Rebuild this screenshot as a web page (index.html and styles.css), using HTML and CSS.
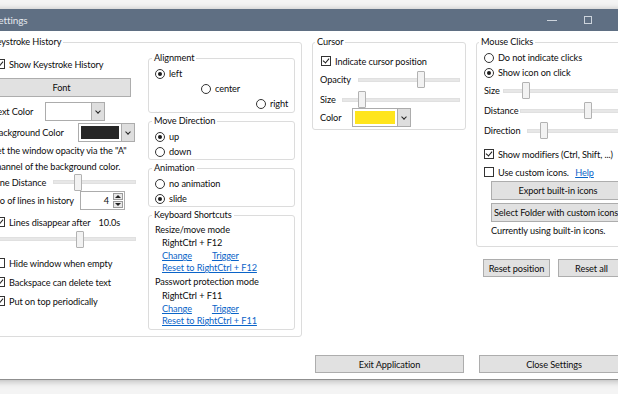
FILE: index.html
```html
<!DOCTYPE html>
<html lang="en">
<head>
  <meta charset="UTF-8" />
  <title>Settings</title>
  <link rel="stylesheet" href="styles.css">
</head>
<body>

<div class="window">
  <div class="titlebar">
    <span class="title">Settings</span>
    <span class="caps">
      <span class="cap"><span class="cap-min"></span></span>
      <span class="cap"><span class="cap-max"></span></span>
      <span class="cap">&#x2715;</span>
    </span>
  </div>

  <div class="content">

    <fieldset class="group keystrokes">
      <legend>Keystroke History</legend>
      <div class="ks-body">
        <div class="ks-left">
          <div class="opt ks-opt first"><span class="box checked"></span>Show Keystroke History</div>
          <button class="btn font-btn">Font</button>
          <div class="field text-color">
            <span class="lbl lbl-text">Text Color</span>
            <div class="combo combo-text"><span class="swatch white"></span><span class="drop"></span></div>
          </div>
          <div class="field bg-color">
            <span class="lbl lbl-bg">Background Color</span>
            <div class="combo combo-bg"><span class="swatch dark"></span><span class="drop"></span></div>
          </div>
          <p class="hint">Set the window opacity via the "A"<br>channel of the background color.</p>
          <div class="field line-dist">
            <span class="lbl lbl-dist">Line Distance</span>
            <input class="slider" type="range" min="0" max="100" value="28">
          </div>
          <div class="field lines-count">
            <span class="lbl lbl-count">No of lines in history</span>
            <div class="spin">
              <span class="spin-val">4</span>
              <span class="spin-btns"><span class="spin-up"></span><span class="spin-down"></span></span>
            </div>
          </div>
          <div class="opt ks-opt disappear"><span class="box checked"></span>Lines disappear after <span class="secs">10.0s</span></div>
          <div class="field fade-row">
            <input class="slider fade-slider" type="range" min="0" max="100" value="62">
          </div>
          <div class="opt ks-opt hide-row"><span class="box"></span>Hide window when empty</div>
          <div class="opt ks-opt gap3"><span class="box checked"></span>Backspace can delete text</div>
          <div class="opt ks-opt gap3"><span class="box checked"></span>Put on top periodically</div>
        </div>

        <div class="ks-right">
          <fieldset class="group sub align">
            <legend>Alignment</legend>
            <div class="opt radio-row"><span class="dot checked"></span>left</div>
            <div class="opt radio-row center"><span class="dot"></span>center</div>
            <div class="opt radio-row right"><span class="dot"></span>right</div>
          </fieldset>
          <fieldset class="group sub">
            <legend>Move Direction</legend>
            <div class="opt radio-row"><span class="dot checked"></span>up</div>
            <div class="opt radio-row"><span class="dot"></span>down</div>
          </fieldset>
          <fieldset class="group sub">
            <legend>Animation</legend>
            <div class="opt radio-row"><span class="dot"></span>no animation</div>
            <div class="opt radio-row"><span class="dot checked"></span>slide</div>
          </fieldset>
          <fieldset class="group sub shortcuts">
            <legend>Keyboard Shortcuts</legend>
            <div class="kb-title">Resize/move mode</div>
            <div class="kb-keys">RightCtrl + F12</div>
            <div class="kb-links"><a href="#">Change</a><a href="#">Trigger</a></div>
            <div class="kb-links"><a href="#">Reset to RightCtrl + F12</a></div>
            <div class="kb-title second">Passwort protection mode</div>
            <div class="kb-keys">RightCtrl + F11</div>
            <div class="kb-links"><a href="#">Change</a><a href="#">Trigger</a></div>
            <div class="kb-links"><a href="#">Reset to RightCtrl + F11</a></div>
          </fieldset>
        </div>
      </div>
    </fieldset>

    <fieldset class="group cursor">
      <legend>Cursor</legend>
      <div class="opt cur-opt"><span class="box checked"></span>Indicate cursor position</div>
      <div class="field cur-opacity">
        <span class="lbl lbl-opacity">Opacity</span>
        <input class="slider" type="range" min="0" max="100" value="63">
      </div>
      <div class="field cur-size">
        <span class="lbl lbl-size">Size</span>
        <input class="slider" type="range" min="0" max="100" value="14">
      </div>
      <div class="field cur-color">
        <span class="lbl lbl-color">Color</span>
        <div class="combo combo-yellow"><span class="swatch yellow"></span><span class="drop"></span></div>
      </div>
    </fieldset>

    <div class="mouse-col">
      <fieldset class="group mouse">
        <legend>Mouse Clicks</legend>
        <div class="opt mouse-opt"><span class="dot"></span>Do not indicate clicks</div>
        <div class="opt mouse-opt"><span class="dot checked"></span>Show icon on click</div>
        <div class="field m-size">
          <span class="lbl lbl-msize">Size</span>
          <input class="slider" type="range" min="0" max="100" value="16">
        </div>
        <div class="field m-dist">
          <span class="lbl lbl-mdist">Distance</span>
          <input class="slider" type="range" min="0" max="100" value="66">
        </div>
        <div class="field m-dir">
          <span class="lbl lbl-mdir">Direction</span>
          <input class="slider" type="range" min="0" max="100" value="14">
        </div>
        <div class="opt mouse-opt modifiers"><span class="box checked"></span>Show modifiers (Ctrl, Shift, ...)</div>
        <div class="opt mouse-opt custom"><span class="box"></span>Use custom icons.&nbsp;<a href="#">Help</a></div>
        <button class="btn icon-btn export">Export built-in icons</button>
        <button class="btn icon-btn folder">Select Folder with custom icons</button>
        <div class="using">Currently using built-in icons.</div>
      </fieldset>
      <div class="reset-row">
        <button class="btn reset-btn">Reset position</button>
        <button class="btn reset-btn">Reset all</button>
      </div>
    </div>

    <button class="btn bottom-btn exit">Exit Application</button>
    <button class="btn bottom-btn close">Close Settings</button>

  </div>
</div>

</body>
</html>
```

FILE: styles.css
```css
* {
  box-sizing: border-box;
}
body {
  margin: 0;
  height: 394px;
  overflow: hidden;
  background: #f4f4f4;
  font-family: Lato, "Noto Sans", sans-serif;
  font-size: 9.2px;
  letter-spacing: -0.1px;
  color: #0d0d0d;
}
a {
  color: #0a64c8;
  text-decoration: underline;
}

/* window frame */
.window {
  margin: 9px 0 0 -20px;
  width: 662px;
  height: 371px;
  background: #fff;
  border-bottom: 1px solid #8f8f8f;
  box-shadow: 0 1px 7px rgba(0, 0, 0, 0.28);
  display: flex;
  flex-direction: column;
}
.titlebar {
  height: 22px;
  flex: none;
  background: #5f6f83;
  color: #e3e8ee;
  display: flex;
  align-items: center;
  padding-left: 13px;
  font-size: 10px;
}
.caps {
  margin-left: auto;
  display: flex;
  height: 100%;
}
.cap {
  width: 36px;
  display: flex;
  align-items: center;
  justify-content: center;
  font-size: 10px;
  color: #d5dbe2;
}
.cap-min {
  width: 10px;
  height: 1px;
  background: #cdd4dc;
}
.cap-max {
  width: 8px;
  height: 8px;
  border: 1px solid #cdd4dc;
}

.content {
  flex: 1;
  display: grid;
  grid-template-columns: 316px 154px 156px;
  grid-template-rows: 1fr auto;
  column-gap: 10px;
  align-items: start;
  padding: 3px 0 6px 6px;
}

/* group boxes */
.group {
  margin: 0;
  padding: 0 5px 0 6px;
  border: 1px solid #dcdcdc;
  border-radius: 3px;
  min-width: 0;
}
.group legend {
  padding: 0 2px;
  margin-left: -4px;
  line-height: 16px;
}
.keystrokes {
  padding: 0 6px 0 5px;
}
.keystrokes legend {
  margin-left: -3px;
}
.ks-body {
  display: flex;
  gap: 12px;
  padding-bottom: 6px;
}
.ks-left {
  width: 144px;
  display: flex;
  flex-direction: column;
}
.ks-right {
  width: 147px;
}
.sub {
  padding: 0 6px;
}
.align {
  padding-bottom: 1px;
}
.shortcuts {
  padding-bottom: 2px;
}

/* check boxes and radio buttons */
.opt {
  display: flex;
  align-items: center;
  gap: 4px;
  height: 16px;
  white-space: nowrap;
}
.box,
.dot {
  flex: none;
  width: 10px;
  height: 10px;
  border: 1px solid #333;
  background: #fff;
  display: flex;
  align-items: center;
  justify-content: center;
}
.dot {
  border-radius: 50%;
}
.dot.checked::after {
  content: "";
  width: 4px;
  height: 4px;
  border-radius: 50%;
  background: #1b1b1b;
}
.box.checked::after {
  content: "";
  width: 5px;
  height: 3px;
  border-left: 1.5px solid #1b1b1b;
  border-bottom: 1.5px solid #1b1b1b;
  transform: translateY(-1px) rotate(-50deg);
}
.ks-opt {
  padding-left: 3px;
}
.ks-opt.first {
  margin-top: 6px;
}
.disappear {
  margin-top: 4px;
}
.hide-row {
  margin-top: 8px;
}
.gap3 {
  margin-top: 3px;
}
.secs {
  margin-left: 4px;
}
.radio-row {
  height: 15px;
}
.radio-row.center {
  margin-left: 46px;
}
.radio-row.right {
  margin-left: 101px;
}

/* buttons */
.btn {
  font: inherit;
  letter-spacing: inherit;
  color: #0d0d0d;
  background: #e1e1e1;
  border: 1px solid #adadad;
  height: 19px;
  padding: 0;
  white-space: nowrap;
  overflow: hidden;
}
.font-btn {
  margin-top: 6px;
  width: 139px;
}

/* label + control rows */
.field {
  display: flex;
  align-items: center;
}
.lbl {
  flex: none;
  white-space: nowrap;
  padding-left: 1px;
}
.text-color {
  margin-top: 5px;
}
.bg-color {
  margin-top: 2px;
}
.lbl-text { width: 53px; }
.lbl-bg { width: 86px; }
.lbl-dist { width: 61px; }
.lbl-count { width: 88px; }
.lbl-opacity { width: 39px; }
.lbl-size { width: 23px; }
.lbl-color { width: 33px; }
.lbl-msize { width: 20px; }
.lbl-mdist { width: 37px; }
.lbl-mdir { width: 44px; }

.hint {
  margin: 1px 0 0;
  line-height: 16px;
  white-space: nowrap;
}
.line-dist {
  height: 14px;
}
.lines-count {
  margin-top: 2px;
}
.fade-row {
  margin-top: 1px;
  height: 16px;
}
.fade-slider {
  flex: none;
  width: 112px;
  margin-left: 24px;
}

/* combo boxes */
.combo {
  display: flex;
  height: 19px;
  border: 1px solid #acacac;
  background: #fff;
}
.combo-text { width: 60px; }
.combo-bg { width: 57px; }
.combo-yellow { width: 59px; }
.swatch {
  flex: 1;
  margin: 2px;
}
.swatch.dark { background: #262626; }
.swatch.yellow { background: #ffe51c; }
.drop {
  flex: none;
  width: 13px;
  background: #dedede;
  border-left: 1px solid #acacac;
  display: flex;
  align-items: center;
  justify-content: center;
}
.drop::after {
  content: "";
  width: 3px;
  height: 3px;
  border-right: 1.5px solid #222;
  border-bottom: 1.5px solid #222;
  transform: translateY(-1px) rotate(45deg);
}

/* number box */
.spin {
  display: flex;
  width: 45px;
  height: 19px;
  border: 1px solid #acacac;
}
.spin-val {
  flex: 1;
  text-align: right;
  padding-right: 3px;
  line-height: 17px;
}
.spin-btns {
  width: 12px;
  display: flex;
  flex-direction: column;
  padding: 1px;
  gap: 1px;
}
.spin-up,
.spin-down {
  flex: 1;
  background: #e8e8e8;
  border: 1px solid #9a9a9a;
  display: flex;
  align-items: center;
  justify-content: center;
}
.spin-up::after,
.spin-down::after {
  content: "";
  border-left: 3px solid transparent;
  border-right: 3px solid transparent;
}
.spin-up::after { border-bottom: 3px solid #222; }
.spin-down::after { border-top: 3px solid #222; }

/* sliders */
.slider {
  -webkit-appearance: none;
  appearance: none;
  flex: 1;
  min-width: 0;
  height: 17px;
  margin: 0;
  background: transparent;
}
.slider::-webkit-slider-runnable-track {
  height: 4px;
  background: #e7e7e7;
  border: 1px solid #e0e0e0;
}
.slider::-webkit-slider-thumb {
  -webkit-appearance: none;
  width: 8px;
  height: 17px;
  margin-top: -7.5px;
  background: #f2f2f2;
  border: 1px solid #b2b2b2;
  border-radius: 1px;
}

/* keyboard shortcuts */
.kb-title {
  height: 13px;
  line-height: 13px;
}
.kb-title.second {
  margin-top: 1px;
  height: 14px;
  line-height: 14px;
}
.kb-keys {
  height: 14px;
  line-height: 14px;
  padding-left: 7px;
}
.kb-links {
  height: 12px;
  line-height: 12px;
  padding-left: 7px;
  display: flex;
  gap: 20px;
}

/* cursor */
.cursor {
  padding-bottom: 2px;
}
.cur-opt {
  margin-top: 3px;
  padding-left: 2px;
}
.cur-opacity {
  margin-top: 2px;
}
.cur-size {
  margin-top: 3px;
}

/* mouse clicks */
.mouse {
  padding-bottom: 8px;
}
.mouse-opt {
  height: 15px;
  padding-left: 1px;
}
.m-size { margin-top: 2px; }
.m-dist { margin-top: 3px; }
.m-dir { margin-top: 3px; }
.modifiers {
  margin-top: 7px;
  height: 16px;
}
.custom {
  margin-top: 2px;
  height: 16px;
}
.icon-btn {
  display: block;
  width: 134px;
  margin-left: 8px;
}
.export { margin-top: 1px; }
.folder { margin-top: 3px; text-align: left; padding-left: 2px; }
.using {
  margin: 1px 0 0 8px;
  line-height: 15px;
  white-space: nowrap;
}
.reset-row {
  margin-top: 12px;
  padding-left: 7px;
  display: flex;
  gap: 8px;
}
.reset-btn {
  width: 67px;
  height: 18px;
}

/* bottom buttons */
.bottom-btn {
  grid-row: 2;
  height: 18px;
  margin-left: 3px;
}
.exit {
  grid-column: 2;
  width: 149px;
}
.close {
  grid-column: 3;
  width: 150px;
}
```
